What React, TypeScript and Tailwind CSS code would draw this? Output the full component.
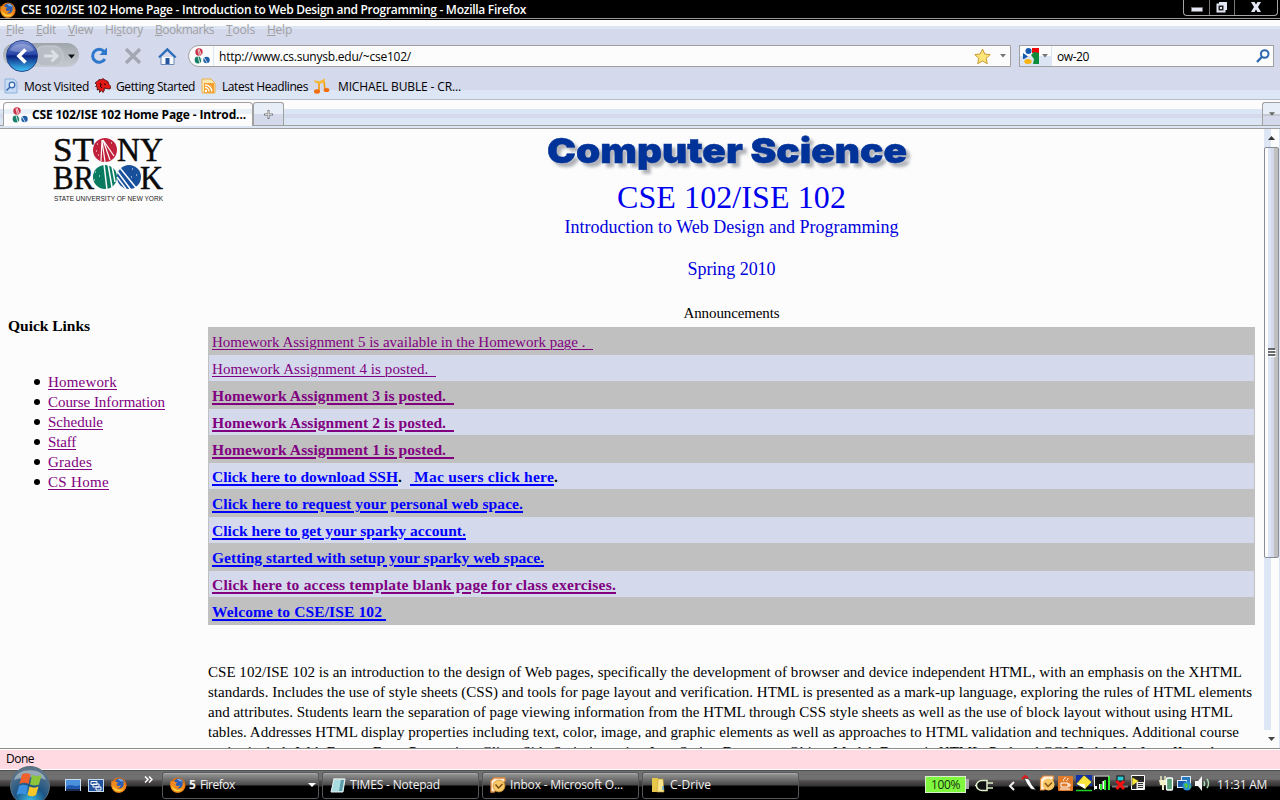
import { useLayoutEffect, useRef } from 'react';
import type { ReactNode } from 'react';

/** Spreads the letters of a one-line run so that it fills the given width. */
function Fit({ w, children, className = '' }: { w: number; children: ReactNode; className?: string }) {
  const ref = useRef<HTMLSpanElement>(null);
  useLayoutEffect(() => {
    const el = ref.current;
    if (!el) return;
    el.style.letterSpacing = '0px';
    const n = (el.textContent || '').length;
    const natural = el.getBoundingClientRect().width;
    el.style.letterSpacing = `${(w - natural) / n}px`;
  }, [w]);
  return (
    <span ref={ref} className={`inline-block whitespace-pre ${className}`}>
      {children}
    </span>
  );
}

function FirefoxIcon({ className = '' }: { className?: string }) {
  return (
    <svg viewBox="0 0 16 16" className={`size-4 shrink-0 ${className}`}>
      <circle cx="8" cy="8.2" r="7.6" fill="#e0700c" />
      <circle cx="8.6" cy="6.6" r="5" fill="#2a5db5" />
      <path d="M7 2.4c2-1 4.600 0 5.400 2.400l-3-.8z" fill="#7cb8ee" />
      <path d="M.6 3.500c.4 1 1 1 2 .8 1-.2 2 0 3 .8.8.5 1.400.4 1.800 1-.9.400-2 .6-1.700 1.700.6 1.600 3 1.500 4.200.2-.2 2-1.800 3-3.500 3 3 1.500 6-.5 6.200-3.500.1-1.600-.4-2.500-1-3.400 2.600 1.600 3.500 4.500 2.700 7-1 3-3.600 4.600-6.500 4.600C3.500 15.700.5 12.500.4 8.500.3 6.600.2 5 .6 3.500z" fill="#f08a1c" />
      <path d="M1.500 8.500c.5 3.500 3 5.800 6 6 2.700 0 4.600-1.300 5.600-3.200-2 1.600-5 2-7.200.9C4 11.300 2.400 10 1.500 8.500z" fill="#fbd23c" />
    </svg>
  );
}

function SeawolfIcon() {
  return (
    <svg viewBox="0 0 16 16" className="size-4 shrink-0">
      <circle cx="5" cy="4" r="3.700" fill="#c8334a" />
      <circle cx="4" cy="12" r="3.400" fill="#168068" />
      <circle cx="12.500" cy="12" r="3.200" fill="#1f5fa8" />
      <path d="M5 1l2.500 6.500M4 1.500l1.500 6M4 8.500l2 7M6.500 9l2 6M10 9.500l3.500 6" stroke="#fcfcfc" strokeWidth=".8" />
    </svg>
  );
}

function OutlookIcon() {
  return (
    <svg viewBox="0 0 16 16" className="size-4 shrink-0">
      <path d="M1 15V4l3-3h11v3L4 15z" fill="#fff0dc" stroke="#e08a3c" strokeWidth="1.300" />
      <circle cx="9" cy="9" r="6" fill="#f7c768" stroke="#c98a2c" strokeWidth=".7" />
      <path d="M5.500 7.500L8.500 11 12.500 7" fill="none" stroke="#7a4a10" strokeWidth="1.400" />
    </svg>
  );
}

function TitleBar() {
  return (
    <div className="flex h-[20px] shrink-0 items-start justify-between border-b border-black bg-black shadow-[inset_0_-1px_0_#9a9a9a]">
      <div className="flex h-[19px] items-center text-white">
        <FirefoxIcon />
        <Fit w={505} className="ml-[5px] text-[12px] font-semibold">CSE 102/ISE 102 Home Page - Introduction to Web Design and Programming - Mozilla Firefox</Fit>
      </div>
      <div className="mr-[2px] flex h-[16px] rounded-b-[4px] border border-t-0 border-[#a5a5a5]">
        <div className="flex w-[26px] items-end justify-center border-r border-[#777] pb-[3px]">
          <svg viewBox="0 0 12 5" className="h-[5px] w-3"><rect x=".5" y=".5" width="11" height="4" fill="#e4e8f4" stroke="#777" strokeWidth=".6" /></svg>
        </div>
        <div className="flex w-[25px] items-center justify-center border-r border-[#777] pb-[2px]">
          <svg viewBox="0 0 12 12" className="size-3">
            <path d="M3 1h8v8h-2V3H3z" fill="#e4e8f4" />
            <rect x="1.500" y="3.500" width="7" height="7" fill="#222" stroke="#e4e8f4" strokeWidth="2" />
            <rect x="4" y="6" width="2" height="2" fill="#e4e8f4" />
          </svg>
        </div>
        <div className="flex w-[42px] items-center justify-center pb-[1px]">
          <svg viewBox="0 0 12 10" className="h-[10px] w-3"><path d="M1 0h3.500L6 2.500 7.500 0H11L8 5l3 5H7.500L6 7.500 4.500 10H1l3-5z" fill="#e4e8f4" /></svg>
        </div>
      </div>
    </div>
  );
}

function MenuBar() {
  return (
    <div className="flex h-[22px] shrink-0 items-center bg-[linear-gradient(#fcfcfc_0_6px,#dce5f3_6px_9px,#d4d9ec_9px)] pb-[2px] pl-[6px] text-[12px] text-[#a0a0a0]">
      <div className="w-[30px]"><Fit w={18}><u>F</u>ile</Fit></div>
      <div className="w-[32px]"><Fit w={20}><u>E</u>dit</Fit></div>
      <div className="w-[37px]"><Fit w={25}><u>V</u>iew</Fit></div>
      <div className="w-[50px]"><Fit w={38}>Hi<u>s</u>tory</Fit></div>
      <div className="w-[71px]"><Fit w={59}><u>B</u>ookmarks</Fit></div>
      <div className="w-[41px]"><Fit w={29}><u>T</u>ools</Fit></div>
      <div><Fit w={25}><u>H</u>elp</Fit></div>
    </div>
  );
}

function NavBar() {
  return (
    <div className="flex h-[30px] shrink-0 items-start bg-[#d4d9ec]">
      <svg viewBox="0 0 188 34" className="-mt-[3px] h-[34px] w-[188px] shrink-0">
        <defs>
          <linearGradient id="back" x1="0" y1="0" x2="0" y2="1">
            <stop offset="0" stopColor="#8294d4" />
            <stop offset=".45" stopColor="#2545a8" />
            <stop offset=".5" stopColor="#0a2080" />
            <stop offset="1" stopColor="#40c8f8" />
          </linearGradient>
          <linearGradient id="pill" x1="0" y1="0" x2="0" y2="1">
            <stop offset="0" stopColor="#9ea6ac" />
            <stop offset="1" stopColor="#c6cbd2" />
          </linearGradient>
        </defs>
        <rect x="3" y="4" width="76" height="24" rx="12" fill="url(#pill)" />
        <rect x="35" y="7" width="28" height="20" rx="9" fill="#b9bec6" stroke="#c9cdd4" />
        <path d="M44 17h12M51.500 11.500L57 17l-5.500 5.500" fill="none" stroke="#dce0e6" strokeWidth="3" />
        <path d="M68 15.500h7l-3.500 4z" fill="#111" />
        <circle cx="22" cy="17" r="15.500" fill="url(#back)" stroke="#27458f" />
        <path d="M10 11c4-8 20-8 24 0-5 3-18 3-24 0z" fill="#fff" opacity=".25" />
        <path d="M25.500 10.500L19 17l6.500 6.500" fill="none" stroke="#fff" strokeWidth="3.600" />
        <path d="M104 12.500a6.500 6.500 0 1 0 .8 7.500" fill="none" stroke="#2d78cc" strokeWidth="3" />
        <path d="M107 8.500v7.500H99.500z" fill="#2d78cc" />
        <path d="M126 10l14 14M140 10l-14 14" stroke="#a3a7b2" strokeWidth="3.200" />
        <path d="M161 18v7.500h13V18" fill="#f8f9fc" stroke="#6c88b4" strokeWidth="1" />
        <path d="M159 18.500l8.300-8 8.300 8" fill="none" stroke="#2d6cb8" strokeWidth="2.400" />
        <rect x="165.500" y="19" width="4" height="6" fill="#2456a0" />
      </svg>
      <div className="mt-[3px] flex h-[22px] w-[823px] items-center rounded-l-[11px] border border-[#a0a0a0] bg-[#fcfcfc] pl-[5px]">
        <SeawolfIcon />
        <div className="ml-[3px] h-full border-l border-[#dce5f3]" />
        <Fit w={192} className="mt-[2px] ml-[5px] text-[12px]">http://www.cs.sunysb.edu/~cse102/</Fit>
        <svg viewBox="0 0 17 17" className="ml-auto size-[17px]">
          <path d="M8.500 1l2.300 5 5.400.6-4 3.700 1.100 5.400-4.800-2.700-4.800 2.700 1.100-5.400-4-3.700 5.400-.6z" fill="#fbe478" stroke="#c99a30" />
        </svg>
        <svg viewBox="0 0 7 4" className="mr-[4px] ml-[9px] h-[3.500px] w-[6px]"><path d="M0 0h7L3.500 4z" fill="#777" /></svg>
      </div>
      <div className="mt-[3px] ml-[8px] flex h-[22px] w-[255px] items-center border border-[#a0a0a0] bg-[#fcfcfc]">
        <div className="flex h-full w-[32px] items-center border-r border-[#dce5f3] bg-[linear-gradient(#fcfcfc_50%,#dce5f3_50%)] pl-[3px]">
          <svg viewBox="0 0 16 16" className="size-4">
            <path d="M9 0h7v6l-7-1z" fill="#f00808" />
            <path d="M16 5v11h-6l1-5-3-4 3-3z" fill="#0d8c3c" />
            <circle cx="5.500" cy="3" r="3" fill="#1459b0" />
            <path d="M0 5l5 3.500L1 11H0z" fill="#1459b0" />
            <ellipse cx="5" cy="13.500" rx="3.700" ry="2.500" fill="#f7b414" />
          </svg>
          <svg viewBox="0 0 7 4" className="ml-[3px] h-[3.500px] w-[6px]"><path d="M0 0h7L3.500 4z" fill="#777" /></svg>
        </div>
        <Fit w={32} className="mt-[2px] ml-[5px] text-[12px]">ow-20</Fit>
        <svg viewBox="0 0 14 14" className="mr-[3px] ml-auto size-[14px]">
          <circle cx="8.700" cy="5" r="3.800" fill="none" stroke="#2f68b0" strokeWidth="2" />
          <path d="M6 7.700L1 13" stroke="#2f68b0" strokeWidth="2.400" />
        </svg>
      </div>
    </div>
  );
}

function BookmarksBar() {
  return (
    <div className="flex h-[28px] shrink-0 items-center border-b border-[#b4bcc8] bg-[linear-gradient(#d4d9ec_0_18px,#dce6f4_18px)] pt-px pl-[3px] text-[12px]">
      <div className="flex w-[92px] items-center">
        <svg viewBox="0 0 16 16" className="size-4 shrink-0">
          <path d="M2 1h9l3 3v11H2z" fill="#c6dcf4" stroke="#8fb2dc" />
          <circle cx="9" cy="7" r="2.800" fill="#e8f2fc" stroke="#3a68b0" strokeWidth="1.300" />
          <path d="M7 9l-3.500 3.500" stroke="#3a68b0" strokeWidth="1.600" />
        </svg>
        <Fit w={65} className="mt-[2px] ml-[5px]">Most Visited</Fit>
      </div>
      <div className="flex w-[105px] items-center">
        <svg viewBox="0 0 16 16" className="size-4 shrink-0">
          <path d="M0 5l2-1.500L4 1.500l2 .3L8 .5l2 1.500 3 1.500 1 3 2 2-1 2.500-4-.5-2-.5.500 2L8 14.500l-1.500-2-2 2v-3L2 12l.5-2.500L.5 8.500 2 7z" fill="#e01818" stroke="#300" strokeWidth=".7" />
          <path d="M9 6l2 .5M5 5l1.500 2L5 8l2 2" stroke="#200" strokeWidth="1" fill="none" />
        </svg>
        <Fit w={79} className="mt-[2px] ml-[5px]">Getting Started</Fit>
      </div>
      <div className="flex w-[113px] items-center">
        <svg viewBox="0 0 16 16" className="ml-[1px] size-4 shrink-0">
          <path d="M1 1h9l4 4v10H1z" fill="#fbe7b0" stroke="#e8b04c" />
          <rect x="3" y="5" width="10" height="10" fill="#f3a030" />
          <circle cx="5" cy="13" r="1.200" fill="#fff" />
          <path d="M4 9.500a4 4 0 0 1 4 4M4 6.800a6.500 6.500 0 0 1 6.700 6.700" fill="none" stroke="#fff" strokeWidth="1.300" />
        </svg>
        <Fit w={86} className="mt-[2px] ml-[5px]">Latest Headlines</Fit>
      </div>
      <div className="flex items-center">
        <svg viewBox="0 0 18 16" className="h-4 w-[18px] shrink-0">
          <path d="M6 13V3.500M11 3.500L12 12" fill="none" stroke="#f2a01c" strokeWidth="1.800" />
          <ellipse cx="4" cy="13.500" rx="3" ry="2.200" fill="#f26c10" />
          <ellipse cx="13.500" cy="12" rx="2.900" ry="2" fill="#f26c10" />
          <path d="M1 2l5 1.500L12 .5l-.5 3.500L6.500 6 2 4.500z" fill="#f8b830" />
        </svg>
        <Fit w={123} className="mt-[2px] ml-[7px]">MICHAEL BUBLE - CR...</Fit>
      </div>
    </div>
  );
}

function TabStrip() {
  return (
    <div className="flex h-[29px] shrink-0 items-end border-b border-[#a0a0a0] bg-[linear-gradient(#fcfcfc_0_9px,#dce5f3_9px_14px,#d4d9ec_14px_18px,#dce5f3_18px_25px,#a0a0a0_25px_26px,#dce5f3_26px)] pb-[2px] pl-[3px]">
      <div className="flex h-[24px] w-[250px] items-center rounded-t-[4px] border border-b-0 border-[#a0a0a0] bg-[linear-gradient(#fcfcfc_0_6px,#eaf0f8_6px_11px,#fcfcfc_11px)] pl-[8px]">
        <SeawolfIcon />
        <Fit w={214} className="ml-[4px] text-[12px] font-bold">CSE 102/ISE 102 Home Page - Introd...</Fit>
      </div>
      <div className="mb-px flex h-[23px] w-[31px] items-center justify-center rounded-t-[3px] border border-b-0 border-[#a0a0a0] bg-[linear-gradient(#e8eef8_50%,#d4d9ec_50%)]">
        <svg viewBox="0 0 9 9" className="size-[9px]"><path d="M4.500 0v9M0 4.500h9" stroke="#777" strokeWidth="2" /><path d="M4.500 1v7M1 4.500h7" stroke="#fff" strokeWidth=".6" /></svg>
      </div>
      <div className="mb-px ml-auto flex h-[23px] w-[18px] items-center justify-center rounded-tl-[3px] border border-r-0 border-b-0 border-[#a0a0a0] bg-[linear-gradient(#e8eef8_50%,#c4c8d0_50%_58%,#d4d9ec_58%)]">
        <svg viewBox="0 0 7 4" className="h-[4px] w-[6px]"><path d="M0 0h7L3.500 4z" fill="#666" /></svg>
      </div>
    </div>
  );
}

function StonyBrookLogo() {
  return (
    <svg viewBox="0 0 112 68" className="ml-[52px] h-[68px] w-[112px] overflow-visible">
      <g fontFamily="'Liberation Serif', serif" fontSize="34" fill="#0a0a0a" stroke="#0a0a0a" strokeWidth=".5">
        <text x="1" y="24" textLength="41" lengthAdjust="spacingAndGlyphs">ST</text>
        <text x="65" y="24" textLength="46" lengthAdjust="spacingAndGlyphs">NY</text>
        <text x="1" y="51.500" textLength="41" lengthAdjust="spacingAndGlyphs">BR</text>
        <text x="88" y="51.500" textLength="23" lengthAdjust="spacingAndGlyphs">K</text>
      </g>
      <circle cx="53" cy="13" r="12" fill="#c0223c" />
      <path d="M50 3l3 22M51 3l7 20M51 3l11 16M50 3l-1 21" stroke="#fcfcfc" strokeWidth="1.200" />
      <path d="M45 7h1M44 14h1M59 6h1M46 18h1" stroke="#fff" />
      <circle cx="53" cy="40" r="12" fill="#087a60" />
      <path d="M52 27l3 26M56 27l4 23M60 29l3 16" stroke="#fcfcfc" strokeWidth="1.500" />
      <path d="M43 35h1M42 43h1M47 39h1" stroke="#fff" />
      <circle cx="77" cy="40" r="12" fill="#18509c" />
      <path d="M65 34l14 19M68 31l17 21M65 40l9 12" stroke="#fcfcfc" strokeWidth="1.500" />
      <path d="M80 32h1M84 38h1M79 40h1" stroke="#fff" />
      <text x="2" y="64.300" textLength="109" lengthAdjust="spacingAndGlyphs" fontFamily="'Liberation Sans', sans-serif" fontSize="7.500" fill="#222">STATE UNIVERSITY OF NEW YORK</text>
    </svg>
  );
}

function DepartmentBanner() {
  return (
    <svg viewBox="0 0 370 46" className="-ml-[8px] h-[46px] w-[370px] overflow-visible [filter:drop-shadow(4px_4px_1.5px_#b0b2b8)]">
      <text x="4" y="31" textLength="360" lengthAdjust="spacingAndGlyphs" fontFamily="Inter, sans-serif" fontWeight="900" fontSize="34.500" fill="#003399" stroke="#003399" strokeWidth=".5">
        Computer Science
      </text>
    </svg>
  );
}

const quickLinks: [string, number][] = [
  ['Homework', 69],
  ['Course Information', 117],
  ['Schedule', 55],
  ['Staff', 28],
  ['Grades', 44],
  ['CS Home', 61],
];

function Sidebar() {
  return (
    <div className="w-[208px] shrink-0 pt-[8px]">
      <StonyBrookLogo />
      <div className="mt-[111px] ml-[8px] h-[20px] text-[15.5px] leading-[20px] font-bold"><Fit w={82}>Quick Links</Fit></div>
      <ul className="mt-[36px]">
        {quickLinks.map(([label, w]) => (
          <li key={label} className="flex h-[20px] items-center pl-[34px]">
            <span className="mr-[8px] size-[6px] rounded-full bg-black" />
            <Fit w={w} className="text-[#800080] underline decoration-1 underline-offset-2">{label}</Fit>
          </li>
        ))}
      </ul>
    </div>
  );
}

const bold = 'text-[15.5px] leading-[22px] font-bold underline decoration-2 underline-offset-2';
const rows: { parts: { t: string; w: number; c: string }[] }[] = [
  { parts: [{ t: 'Homework Assignment 5 is available in the Homework page .\u00a0\u00a0', w: 381, c: 'text-[#800080] underline decoration-1 underline-offset-2' }] },
  { parts: [{ t: 'Homework Assignment 4 is posted.\u00a0\u00a0', w: 224, c: 'text-[#800080] underline decoration-1 underline-offset-2' }] },
  { parts: [{ t: 'Homework Assignment 3 is posted.\u00a0\u00a0', w: 242, c: `text-[#800080] ${bold}` }] },
  { parts: [{ t: 'Homework Assignment 2 is posted.\u00a0\u00a0', w: 242, c: `text-[#800080] ${bold}` }] },
  { parts: [{ t: 'Homework Assignment 1 is posted.\u00a0\u00a0', w: 242, c: `text-[#800080] ${bold}` }] },
  {
    parts: [
      { t: 'Click here to download SSH', w: 186, c: `text-[#0000ff] ${bold}` },
      { t: '.\u00a0\u00a0', w: 12, c: 'text-[15.5px] leading-[22px] font-bold' },
      { t: '\u00a0Mac users click here', w: 144, c: `text-[#0000ff] ${bold}` },
      { t: '.', w: 4, c: 'text-[15.5px] leading-[22px] font-bold' },
    ],
  },
  { parts: [{ t: 'Click here to request your personal web space.', w: 311, c: `text-[#0000ff] ${bold}` }] },
  { parts: [{ t: 'Click here to get your sparky account.', w: 254, c: `text-[#0000ff] ${bold}` }] },
  { parts: [{ t: 'Getting started with setup your sparky web space.', w: 332, c: `text-[#0000ff] ${bold}` }] },
  { parts: [{ t: 'Click here to access template blank page for class exercises.', w: 404, c: `text-[#800080] ${bold}` }] },
  { parts: [{ t: 'Welcome to CSE/ISE 102\u00a0', w: 174, c: `text-[#0000ff] ${bold}` }] },
];

const paragraph: [string, number][] = [
  ['CSE 102/ISE 102 is an introduction to the design of Web pages, specifically the development of browser and device independent HTML, with an emphasis on the XHTML', 1034],
  ['standards. Includes the use of style sheets (CSS) and tools for page layout and verification. HTML is presented as a mark-up language, exploring the rules of HTML elements', 1044],
  ['and attributes. Students learn the separation of page viewing information from the HTML through CSS style sheets as well as the use of block layout without using HTML', 1025],
  ['tables. Addresses HTML display properties including text, color, image, and graphic elements as well as approaches to HTML validation and techniques. Additional course', 1031],
];

function MainColumn() {
  return (
    <div className="w-[1047px] shrink-0">
      <div className="flex flex-col items-center">
        <h1 className="mt-[3px] h-[45px]">
          <DepartmentBanner />
        </h1>
        <div className="h-[40px] text-[32px] leading-[40px] text-[#0000ee]"><Fit w={229}>CSE 102/ISE 102</Fit></div>
        <div className="h-[20px] text-[18px] leading-[20px] text-[#0000dd]"><Fit w={334}>Introduction to Web Design and Programming</Fit></div>
        <div className="mt-[22px] h-[20px] text-[18px] leading-[20px] text-[#0000dd]"><Fit w={88}>Spring 2010</Fit></div>
        <div className="mt-[23px] h-[25px] leading-[22px]"><Fit w={96}>Announcements</Fit></div>
      </div>
      <div className="flex flex-col gap-px bg-[#c0c0c0] p-px">
        {rows.map((row, i) => (
          <div key={i} className={`flex h-[26px] items-center pt-[2px] pl-[3px] ${i % 2 ? 'bg-[#d4d9ec]' : 'bg-[#c0c0c0]'}`}>
            {row.parts.map((p, j) => (
              <Fit key={j} w={p.w} className={p.c}>{p.t}</Fit>
            ))}
          </div>
        ))}
      </div>
      <div className="mt-[37px]">
        {paragraph.map(([t, w]) => (
          <div key={t} className="h-[20px] leading-[20px]"><Fit w={w}>{t}</Fit></div>
        ))}
        <div className="h-[20px] leading-[20px]">
          <Fit w={868}>topics include Web Forms, Form Processing, Client Side Scripting using Java Script, Document Object Model, Dynamic HTML, Perl and CGI. </Fit>
          <Fit w={166} className="font-bold">Suitable for all majors.</Fit>
        </div>
      </div>
    </div>
  );
}

function ScrollBar() {
  return (
    <div className="ml-[9px] flex w-[16px] flex-col border-r border-[#dce5f3] bg-[linear-gradient(90deg,#dce6f4_0_7px,#fcfcfc_7px)]">
      <div className="flex h-[18px] items-center justify-center">
        <svg viewBox="0 0 7 4" className="h-[4px] w-[7px]"><path d="M3.500 0L7 4H0z" fill="#333" /></svg>
      </div>
      <div className="flex h-[411px] items-center justify-center rounded-[2px] border border-[#8c8c94] bg-[linear-gradient(90deg,#fcfcfc_0_3px,#dce5f3_3px_6px,#d4d9ec_6px_9px,#c0c0c0_9px)]">
        <svg viewBox="0 0 8 9" className="h-[9px] w-[8px]"><path d="M0 1h7M0 4h7M0 7h7" stroke="#444" strokeWidth="1.300" /><path d="M1 2.500h7M1 5.500h7M1 8.500h7" stroke="#fff" /></svg>
      </div>
      <div className="mt-auto flex h-[18px] items-center justify-center bg-[#fcfcfc]">
        <svg viewBox="0 0 7 4" className="h-[4px] w-[7px]"><path d="M0 0h7L3.500 4z" fill="#444" /></svg>
      </div>
    </div>
  );
}

function TaskButton({ icon, label, w, menu, count }: { icon: ReactNode; label: string; w: number; menu?: boolean; count?: string }) {
  return (
    <div className="flex h-[27px] w-[157px] items-center rounded-[3px] border border-[#55585c] bg-[linear-gradient(#9a9a9a_0,#6c6c6c_7px,#4a4748_12px,#000_13px)] pb-px pl-[7px] text-[12px] text-[#f0f0f0] shadow-[inset_0_1px_0_#aaa]">
      {icon}
      {count && <b className="ml-[3px]">{count}</b>}
      <Fit w={w} className="ml-[4px]">{label}</Fit>
      {menu && <svg viewBox="0 0 8 4" className="mr-[2px] ml-auto h-[4px] w-[8px]"><path d="M0 0h8L4 4z" fill="#fff" /></svg>}
    </div>
  );
}

function StartOrb() {
  return (
    <svg viewBox="0 0 44 34" className="relative z-10 -mt-[5px] ml-[8px] h-[34px] w-[44px] shrink-0">
      <defs>
        <radialGradient id="orb" cx=".5" cy=".9" r=".8">
          <stop offset="0" stopColor="#3cc0e8" />
          <stop offset=".5" stopColor="#1c5484" />
          <stop offset="1" stopColor="#5c7488" />
        </radialGradient>
      </defs>
      <circle cx="22" cy="20" r="19.500" fill="url(#orb)" stroke="#5a7080" />
      <path d="M6 14C9 1 35 1 38 14c-9-4-22-3-32 0z" fill="#fff" opacity=".4" />
      <path d="M14 8.500c3-2 6-1.500 8.500 0L20.500 18c-3-1.500-5.500-2-9 0z" fill="#f0602c" />
      <path d="M24 9c3 1.500 6 1.500 9.500 0L31 18.500c-3 1.500-6 1-9 0z" fill="#8cc43c" />
      <path d="M11 20c3-2 6-1.500 9 0L18 29c-3-2-6-1.500-9.500 0z" fill="#3c90e0" />
      <path d="M21.500 20.500c3 1.500 6 1.500 9 0L28 29c-3 2-5.500 1.500-8.500 0z" fill="#fbc828" />
    </svg>
  );
}

function Tray() {
  return (
    <svg viewBox="0 0 249 24" className="h-6 w-[249px] shrink-0">
      <path d="M19 5.500h-5a5 4.500 0 0 0 0 10h5zM19 8h6M19 13h6M9 10.500H7" fill="#111" stroke="#dff0c8" strokeWidth="1.500" />
      <path d="M46 7l-4 4 4 4" fill="none" stroke="#eee" strokeWidth="2" />
      <path d="M56 3l5 1 3 6 4 5-5-1-4-5z" fill="#fff" stroke="#222" strokeWidth=".7" /><path d="M54 4l3-3 3 2" fill="none" stroke="#e01818" strokeWidth="2" />
      <path d="M72.500 15V4l3-3h10v3L76 15z" fill="#fff0dc" stroke="#e08a3c" strokeWidth="1.200" />
      <circle cx="80.500" cy="9.500" r="6" fill="#f7c768" /><path d="M77 8l3 3.500 4-4" fill="none" stroke="#84500f" strokeWidth="1.400" />
      <rect x="90" y="1" width="15" height="15" rx="1" fill="#e07a28" /><path d="M93 8h7v4h-7zM100 9h2v2h-2M92 14h10M96 6c-2-2 2-2 1-4M99 6c-1-1 1-1 1-3" fill="none" stroke="#fff" />
      <path d="M108 0h16v11h-16z" fill="#1234a8" /><path d="M116 0l8 7-7 7-9-5z" fill="#f8e43c" stroke="#222" strokeWidth=".6" /><path d="M108.500 8.500l8 .5 1 5z" fill="#fff" /><path d="M108 15.500h16" stroke="#20d020" strokeWidth="1.500" />
      <path d="M126.500.5h14v15h-14z" fill="#101010" /><path d="M127 14v-3h2v3zM131 14V9h2v5zM134.500 14V6h2v8z" fill="#fff" /><path d="M132 15V9h2v6zM136 15V5h2v10zM140 15V1h2v14z" fill="#30e830" /><path d="M126.500 15V1H141" fill="none" stroke="#f4f4f4" />
      <path d="M144 11.500h16" stroke="#777" strokeWidth="2" /><rect x="149" y="1" width="7" height="5" fill="#28c8d0" stroke="#111" /><path d="M148.500 6l7.500 8M156 6l-7.500 8" stroke="#f81010" strokeWidth="2.800" />
      <path d="M163.500.5h13v14h-13z" fill="#262626" stroke="#fff" /><path d="M164 2l7 4-7 5z" fill="#f8e838" stroke="#222" strokeWidth=".6" /><path d="M168.500 7h8v7h-8z" fill="#e8e8e8" /><path d="M170 8.500h5M170 10.500h5M170 12.500h5" stroke="#333" />
      <path d="M193 1v4M197 1v4" stroke="#e8e8c0" strokeWidth="1.500" /><path d="M191 5h8l-1 5h-2v5h-2v-5h-2z" fill="#f0f0c8" /><rect x="198.500" y="3" width="6" height="12" rx="1" fill="#58a078" stroke="#fff" strokeWidth="1.300" />
      <rect x="213.500" y="1.500" width="9" height="7" fill="#2878c0" stroke="#dce8f8" /><rect x="209.500" y="5.500" width="9" height="7" fill="#1858a8" stroke="#dce8f8" /><circle cx="219" cy="11" r="4.500" fill="#2c8cd8" /><path d="M216 9l3-1 1 3-2 3zM221 9l2 3-2 2z" fill="#54c838" />
      <path d="M227 6h3l4-5v15l-4-5h-3z" fill="#f4f4f4" /><path d="M236 6c1 2 1 3 0 5M239 4c2 3 2 6 0 9" fill="none" stroke="#a8dcb0" strokeWidth="1.500" />
    </svg>
  );
}

function Taskbar() {
  return (
    <div className="flex h-[29px] shrink-0 items-start bg-[linear-gradient(#6e6e6e_0,#707070_8px,#524c4d_10px,#333_15px,#000_16px)]">
      <StartOrb />
      <div className="mt-[6px] ml-[13px] flex w-[97px] items-start">
        <svg viewBox="0 0 17 16" className="h-4 w-[17px]"><rect x=".5" y="2.500" width="15" height="11" fill="#4a90dc" stroke="#c8dcf0" /><path d="M1 10c5-4 8 1 14-2v5H1z" fill="#2058b0" /><rect x="1" y="12" width="14" height="2" fill="#1b2c50" /></svg>
        <svg viewBox="0 0 17 16" className="ml-[6px] h-4 w-[17px]"><rect x=".5" y="2.500" width="15" height="12" fill="#2454a0" stroke="#c8dcf0" /><path d="M3 4.500h6v3H3zM5 7h6v3H5zM8 10h5v3H8z" fill="#2454a0" stroke="#fff" /></svg>
        <FirefoxIcon className="ml-[6px]" />
        <svg viewBox="0 0 9 7" className="-mt-px ml-[17px] h-[7px] w-[9px]"><path d="M1 .5l3 3-3 3M5 .5l3 3-3 3" fill="none" stroke="#fff" strokeWidth="1.500" /></svg>
      </div>
      <div className="flex gap-[3px] pt-px">
        <TaskButton icon={<FirefoxIcon />} count="5" label="Firefox" w={35} menu />
        <TaskButton icon={<svg viewBox="0 0 16 16" className="size-4 shrink-0"><path d="M4 2h11l-2 13H1z" fill="#a8dce0" stroke="#e8f4f4" /><path d="M11 3h3l-2 11H9z" fill="#5c9ca8" /><path d="M4 1v2M6 1v2M8 1v2M10 1v2M12 1v2M14 1v2" stroke="#ddd" /></svg>} label="TIMES - Notepad" w={90} />
        <TaskButton icon={<OutlookIcon />} label="Inbox - Microsoft O..." w={113} />
        <TaskButton icon={<svg viewBox="0 0 16 16" className="size-4 shrink-0"><path d="M2 1h6v14H2z" fill="#e8c848" /><path d="M8 2h5l1 13H7z" fill="#f8e48c" stroke="#c8a030" strokeWidth=".6" /><path d="M13 9v4" stroke="#58a8e0" strokeWidth="1.500" /></svg>} label="C-Drive" w={41} />
      </div>
      <div className="mt-[5px] ml-[126px] flex h-[17px] w-[41px] items-center justify-center border border-[#d8f0c8] bg-[#80f840] text-[12px] text-[#183010]"><Fit w={29}>100%</Fit></div>
      <div className="mt-[8px] h-[10px] w-[3px] bg-[#aaa]" />
      <div className="-ml-[1px] w-[249px] overflow-hidden pt-[4px]"><Tray /></div>
      <div className="mt-[5px] h-[18px] text-[12px] leading-[18px] whitespace-nowrap text-[#f0f0f0]"><Fit w={50}>11:31 AM</Fit></div>
    </div>
  );
}

export default function App() {
  return (
    <div className="flex h-[800px] w-[1280px] flex-col overflow-hidden bg-[#fcfcfc] font-['Open_Sans','Noto_Sans',sans-serif] text-black">
      <TitleBar />
      <MenuBar />
      <NavBar />
      <BookmarksBar />
      <TabStrip />
      <div className="flex h-[619px] shrink-0 overflow-hidden font-['Liberation_Serif',serif] text-[15px]">
        <Sidebar />
        <MainColumn />
        <ScrollBar />
      </div>
      <div className="h-[23px] shrink-0 border-t border-b border-t-[#8c8c8c] border-b-[#505050] bg-[#ffdae3] pl-[6px] text-[12px] leading-[20px] shadow-[inset_0_1px_0_#fff,inset_0_-1px_0_#fff]">
        <Fit w={28}>Done</Fit>
      </div>
      <Taskbar />
    </div>
  );
}
